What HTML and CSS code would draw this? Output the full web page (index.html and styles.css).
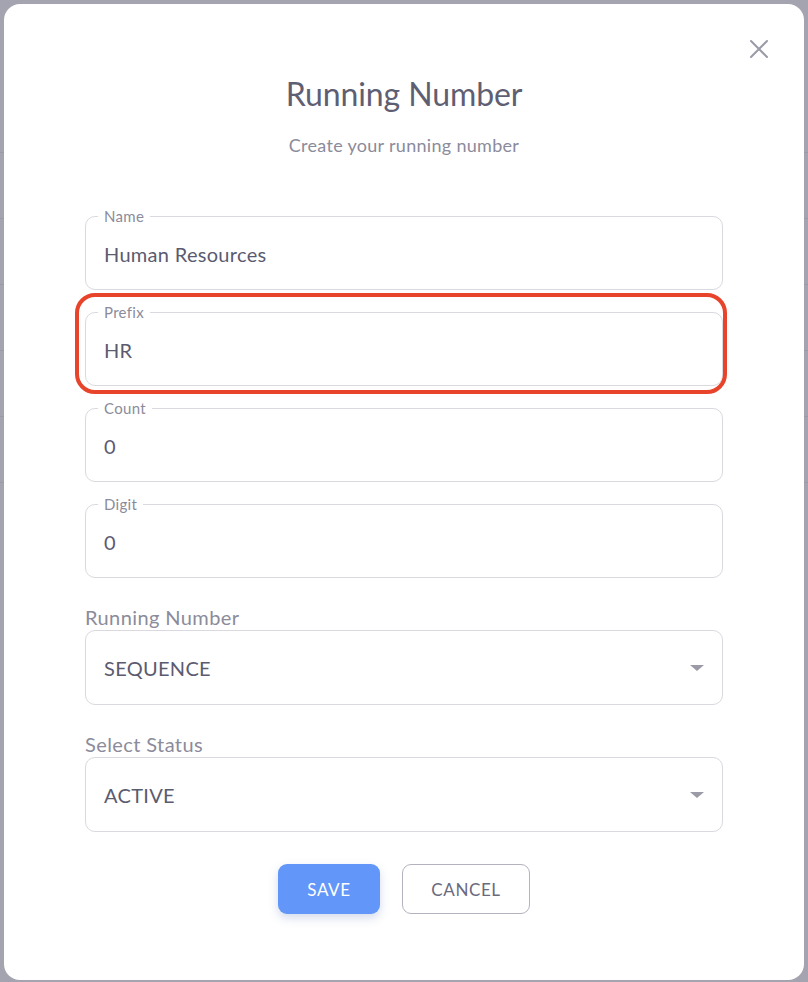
FILE: index.html
```html
<!DOCTYPE html>
<html>
<head>
<meta charset="utf-8">
<link rel="stylesheet" href="styles.css">
</head>
<body>
<div class="backdrop">
  <div class="bg-lines">
    <div class="bg-line"></div><div class="bg-line"></div><div class="bg-line"></div><div class="bg-line"></div><div class="bg-line"></div><div class="bg-line"></div>
  </div>
  <div class="modal">
    <button class="close" aria-label="Close">
      <svg width="20" height="20" viewBox="0 0 20 20"><path d="M2 2 L18 18 M18 2 L2 18" stroke="#9b9ba8" stroke-width="2" stroke-linecap="round" fill="none"/></svg>
    </button>
    <h1 class="title">Running Number</h1>
    <p class="subtitle">Create your running number</p>

    <form class="form">
      <fieldset class="field">
        <legend class="legend">Name</legend>
        <div class="value">Human Resources</div>
      </fieldset>
      <div class="highlight">
        <fieldset class="field">
          <legend class="legend">Prefix</legend>
          <div class="value">HR</div>
        </fieldset>
      </div>
      <fieldset class="field">
        <legend class="legend">Count</legend>
        <div class="value">0</div>
      </fieldset>
      <fieldset class="field">
        <legend class="legend">Digit</legend>
        <div class="value">0</div>
      </fieldset>

      <div class="select-group first">
        <div class="select-label">Running Number</div>
        <div class="select">
          <span class="value">SEQUENCE</span>
          <span class="caret"></span>
        </div>
      </div>
      <div class="select-group second">
        <div class="select-label">Select Status</div>
        <div class="select">
          <span class="value">ACTIVE</span>
          <span class="caret"></span>
        </div>
      </div>

      <div class="actions">
        <button type="button" class="btn btn-save">SAVE</button>
        <button type="button" class="btn btn-cancel">CANCEL</button>
      </div>
    </form>
  </div>
</div>
</body>
</html>
```

FILE: styles.css
```css
* { box-sizing: border-box; }
html, body {
  margin: 0;
  padding: 0;
  width: 808px;
  height: 982px;
  overflow: hidden;
}
body {
  background: #a4a4b0;
  font-family: "Lato", "Nunito Sans", "Open Sans", sans-serif;
  color: #5b5b70;
}
.backdrop {
  position: relative;
  width: 808px;
  height: 982px;
  padding: 4px;
}
.bg-lines {
  position: absolute;
  inset: 0;
  padding-top: 152px;
  display: flex;
  flex-direction: column;
  gap: 65px;
}
.bg-line { height: 1px; background: #9b9ba8; }
.modal {
  position: relative;
  width: 800px;
  height: 976px;
  background: #ffffff;
  border-radius: 16px;
  padding: 64px 81px 0 81px;
}
.close {
  position: absolute;
  top: 33px;
  right: 33px;
  width: 24px;
  height: 24px;
  padding: 2px;
  border: 0;
  background: none;
}
.close svg { display: block; }
.title {
  margin: 0;
  text-align: center;
  font-size: 32px;
  font-weight: 400;
  line-height: 52px;
  color: #5f5f73;
  letter-spacing: -0.1px;
}
.subtitle {
  margin: 13px 0 0;
  text-align: center;
  font-size: 18px;
  line-height: 24px;
  color: #8b8b9b;
  letter-spacing: 0.3px;
}
.form {
  margin-top: 51px;
  display: flex;
  flex-direction: column;
  gap: 22px;
}
.field {
  margin: 0;
  height: 82px;
  border: 1px solid #d9d9df;
  border-radius: 10px;
  padding: 0 18px;
  margin-top: -8px;
}
.form > .field:first-child { margin-top: 0; }
.legend {
  padding: 0 6px;
  margin-left: -6px;
  font-size: 15px;
  line-height: 16px;
  color: #8b8b9b;
  letter-spacing: 0.3px;
}
.value {
  font-size: 20px;
  color: #5b5b70;
  line-height: 24px;
  padding-top: 18px;
  letter-spacing: 0.3px;
}
.highlight {
  position: relative;
  margin-top: -8px;
}
.highlight .field { margin-top: 0; }
.highlight::before {
  content: "";
  position: absolute;
  left: -10px;
  right: -4px;
  top: -11px;
  bottom: -8px;
  border: 4px solid #e8432b;
  border-radius: 20px;
  pointer-events: none;
}
.select-group { display: flex; flex-direction: column; gap: 1px; }
.select-group.first { margin-top: 5px; }
.select-group.second { margin-top: 5px; }
.select-label {
  font-size: 20px;
  line-height: 24px;
  color: #8b8b9b;
  letter-spacing: 0.4px;
}
.select {
  height: 75px;
  border: 1px solid #d9d9df;
  border-radius: 10px;
  padding: 0 18px;
  display: flex;
  align-items: center;
  justify-content: space-between;
}
.select .value { padding-top: 0; }
.caret {
  width: 0;
  height: 0;
  border-left: 7px solid transparent;
  border-right: 7px solid transparent;
  border-top: 6px solid #9b9ba8;
  margin-right: 0;
}
.actions {
  margin-top: 10px;
  display: flex;
  justify-content: center;
  gap: 22px;
}
.btn {
  height: 50px;
  font-family: inherit;
  font-size: 17px;
  letter-spacing: 0.6px;
  border-radius: 9px;
  cursor: pointer;
}
.btn-save {
  width: 102px;
  background: #6296f8;
  color: #ffffff;
  border: 0;
  box-shadow: 0 4px 10px rgba(80, 110, 180, 0.25);
}
.btn-cancel {
  width: 128px;
  background: #ffffff;
  color: #6a6a7e;
  border: 1px solid #b3b3c0;
}
```
